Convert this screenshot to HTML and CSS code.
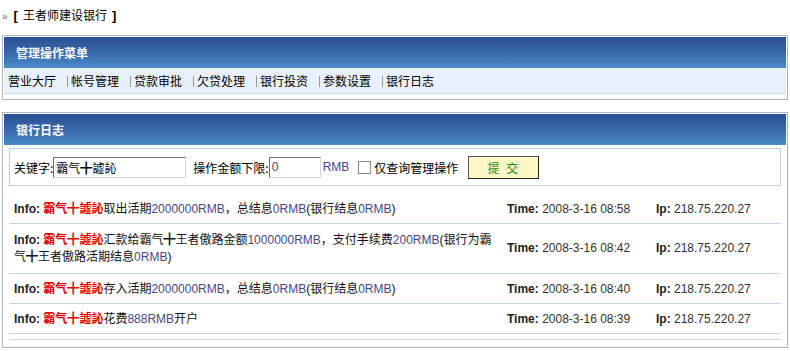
FILE: index.html
```html
<!DOCTYPE html>
<html lang="zh-CN">
<head>
<meta charset="utf-8">
<title>银行日志</title>
<link rel="stylesheet" href="styles.css">
</head>
<body>
<div class="crumb"><span class="raquo">»</span><span class="br">[</span>王者师建设银行<span class="br br-r">]</span></div>

<div class="panel">
  <div class="panel-head">管理操作菜单</div>
  <div class="nav">
    <a>营业大厅</a><span class="sep"></span><a>帐号管理</a><span class="sep"></span><a>贷款审批</a><span class="sep"></span><a>欠贷处理</a><span class="sep"></span><a>银行投资</a><span class="sep"></span><a>参数设置</a><span class="sep"></span><a>银行日志</a>
  </div>
</div>

<div class="panel panel-log">
  <div class="panel-head">银行日志</div>
  <div class="log-body">
    <div class="search">
      <span class="lbl">关键字:</span><span class="input kw">霸气<span class="cross">╋</span>譃訫</span>
      <span class="lbl lbl2">操作金额下限:</span><span class="input amt num">0</span><span class="rmb">RMB</span>
      <span class="check"></span><span class="lbl lbl3">仅查询管理操作</span>
      <span class="btn">提 交</span>
    </div>
    <table class="log">
      <colgroup><col class="w-info"><col class="w-time"><col></colgroup>
      <tr>
        <td class="c-info"><b class="k">Info:</b> <b class="name">霸气<span class="cross">╋</span>譃訫</b>取出活期<span class="num">2000000RMB</span>，总结息<span class="num">0RMB</span>(银行结息<span class="num">0RMB</span>)</td>
        <td class="c-time"><b class="k">Time:</b> 2008-3-16 08:58</td>
        <td class="c-ip"><b class="k">Ip:</b> 218.75.220.27</td>
      </tr>
      <tr class="two">
        <td class="c-info"><b class="k">Info:</b> <b class="name">霸气<span class="cross">╋</span>譃訫</b>汇款给霸气<span class="cross">╋</span>王者傲路金额<span class="num">1000000RMB</span>，支付手续费<span class="num">200RMB</span>(银行为霸<br>气<span class="cross">╋</span>王者傲路活期结息<span class="num">0RMB</span>)</td>
        <td class="c-time"><b class="k">Time:</b> 2008-3-16 08:42</td>
        <td class="c-ip"><b class="k">Ip:</b> 218.75.220.27</td>
      </tr>
      <tr>
        <td class="c-info"><b class="k">Info:</b> <b class="name">霸气<span class="cross">╋</span>譃訫</b>存入活期<span class="num">2000000RMB</span>，总结息<span class="num">0RMB</span>(银行结息<span class="num">0RMB</span>)</td>
        <td class="c-time"><b class="k">Time:</b> 2008-3-16 08:40</td>
        <td class="c-ip"><b class="k">Ip:</b> 218.75.220.27</td>
      </tr>
      <tr>
        <td class="c-info"><b class="k">Info:</b> <b class="name">霸气<span class="cross">╋</span>譃訫</b>花费<span class="num">888RMB</span>开户</td>
        <td class="c-time"><b class="k">Time:</b> 2008-3-16 08:39</td>
        <td class="c-ip"><b class="k">Ip:</b> 218.75.220.27</td>
      </tr>
      <tr class="foot"><td colspan="3"></td></tr>
    </table>
  </div>
</div>
</body>
</html>
```

FILE: styles.css
```css
html, body {
  margin: 0;
  padding: 0;
  background: #fff;
}
body {
  font-family: "Liberation Sans", "Noto Sans CJK SC", sans-serif;
  font-size: 12px;
  color: #000;
}
.crumb {
  height: 35px;
  line-height: 14px;
  padding: 9px 0 0 2px;
  box-sizing: border-box;
}
.raquo {
  color: #666;
  font-size: 10px;
  margin-right: 6px;
}
.br {
  font-weight: bold;
  font-size: 13px;
  margin-right: 5px;
}
.br-r { margin: 0 0 0 5px; }

.panel {
  margin: 0 2px;
  border: 1px solid #a8b6c6;
  padding: 1px;
}
.panel-head {
  height: 31px;
  line-height: 31px;
  padding-left: 12px;
  background: linear-gradient(#2a4f91, #3a6bae 55%, #4b8bc9);
  color: #fff;
  font-weight: bold;
  font-family: "Noto Sans CJK SC", sans-serif;
}
.nav {
  height: 25px;
  line-height: 25px;
  background: #e8f1fb;
  border-bottom: 1px solid #c9d7e6;
  padding-left: 4px;
  margin-bottom: 4px;
  font-family: "Noto Sans CJK SC", sans-serif;
  display: flex;
  align-items: center;
}
.nav a { color: #000; }
.sep {
  display: inline-block;
  width: 1px;
  height: 11px;
  background: #9a9a9a;
  margin: 1px 3px 0 11px;
}

.panel-log { margin-top: 12px; }
.log-body { padding: 3px 5px 6px; }

.search {
  height: 36px;
  border: 1px solid #c8ccd4;
  display: flex;
  align-items: center;
  padding-left: 4px;
  font-family: "Noto Sans CJK SC", sans-serif;
}
.lbl { white-space: nowrap; }
.input {
  display: inline-block;
  box-sizing: border-box;
  height: 21px;
  line-height: 19px;
  border: 1px solid;
  border-color: #707070 #d6d6d6 #d6d6d6 #707070;
  padding-left: 2px;
  background: #fff;
}
.kw { width: 133px; }
.amt { width: 52px; font-family: "Liberation Sans", sans-serif; }
.lbl2 { margin-left: 7px; }
.rmb {
  margin-left: 2px;
  color: #4d4290;
  font-family: "Liberation Sans", sans-serif;
}
.check {
  display: inline-block;
  width: 11px;
  height: 11px;
  border: 1px solid #8a8a8a;
  background: #fff;
  margin-left: 9px;
}
.lbl3 { margin-left: 3px; }
.btn {
  box-sizing: border-box;
  width: 71px;
  height: 23px;
  margin-left: 10px;
  line-height: 21px;
  text-align: center;
  background: #fff8c6;
  border: 1px solid;
  border-color: #555 #222 #222 #555;
  color: #1b8a1b;
  letter-spacing: 2px;
}
.cross { font-family: "Noto Sans CJK SC", sans-serif; font-weight: bold; }

.log {
  width: 100%;
  border-collapse: collapse;
  table-layout: fixed;
  margin-top: 8px;
}
.w-info { width: 498px; }
.w-time { width: 149px; }
.log td {
  border-bottom: 1px solid #cbd5e0;
  padding: 6px 0 6px 5px;
  line-height: 16px;
  vertical-align: middle;
  color: #111;
}
.log td.c-time, .log td.c-ip { padding-left: 0; color: #333; }
.log tr.two td { padding-top: 7px; padding-bottom: 8px; }
.k { color: #222; }
.name { color: #e10000; }
.num { color: #4a4684; }
.log tr.foot td {
  padding: 0;
  height: 5px;
  border-bottom: 1px solid #cbd5e0;
}
```
